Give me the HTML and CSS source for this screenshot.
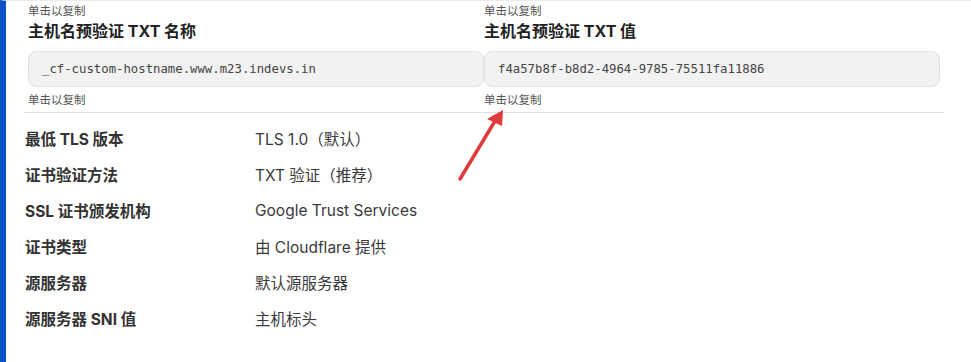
FILE: index.html
```html
<!DOCTYPE html>
<html lang="zh-CN">
   <head>
      <meta charset="UTF-8">
      <meta name="viewport" content="width=device-width, initial-scale=1.0">
      <title>自定义主机名</title>
      <link rel="stylesheet" href="styles.css">
   </head>
   <body>
      <div class="card">
         <div class="records">
            <div class="record">
               <div class="hint">单击以复制</div>
               <h3>主机名预验证 TXT 名称</h3>
               <div class="copy-box">_cf-custom-hostname.www.m23.indevs.in</div>
               <div class="hint">单击以复制</div>
            </div>
            <div class="record">
               <div class="hint">单击以复制</div>
               <h3>主机名预验证 TXT 值</h3>
               <div class="copy-box">f4a57b8f-b8d2-4964-9785-75511fa11886</div>
               <div class="hint">单击以复制</div>
            </div>
         </div>
         <hr class="divider">
         <dl class="details">
            <div class="row"><dt>最低 TLS 版本</dt><dd>TLS 1.0（默认）</dd></div>
            <div class="row"><dt>证书验证方法</dt><dd>TXT 验证（推荐）</dd></div>
            <div class="row"><dt>SSL 证书颁发机构</dt><dd>Google Trust Services</dd></div>
            <div class="row"><dt>证书类型</dt><dd>由 Cloudflare 提供</dd></div>
            <div class="row"><dt>源服务器</dt><dd>默认源服务器</dd></div>
            <div class="row"><dt>源服务器 SNI 值</dt><dd>主机标头</dd></div>
         </dl>
         <!-- annotation arrow -->
         <svg class="arrow" width="971" height="362" viewBox="0 0 971 362">
            <line x1="460" y1="179" x2="495" y2="121" stroke="#e03a3a" stroke-width="3.5" stroke-linecap="round"/>
            <polygon points="503,110 487,119 502,126" fill="#e03a3a"/>
         </svg>
      </div>
   </body>
</html>
```

FILE: styles.css
```css
body {
margin: 0;
padding: 0;
background-color: #fff;
font-family: Inter, "Noto Sans CJK SC", sans-serif;
color: #333;
}
.card {
position: relative;
width: 957px;
height: 361px;
border-top: 1px solid #ececec;
border-left: 6px solid #0b52c9;
border-right: 2px solid #e6e6e6;
padding: 0 0 0 18px;
box-sizing: content-box;
}
.records {
display: grid;
grid-template-columns: 456px 456px;
column-gap: 0;
padding-left: 4px;
}
.hint {
font-size: 11.5px;
line-height: 14px;
color: #555;
}
.records .hint:first-child {
margin-top: 3px;
}
.record h3 {
margin: 3px 0 0;
font-size: 16px;
line-height: 21px;
font-weight: 700;
color: #222;
}
.copy-box {
margin: 9px 0 6px;
height: 36px;
box-sizing: border-box;
padding: 0 13px;
display: flex;
align-items: center;
background-color: #f2f2f2;
border: 1px solid #e2e2e2;
border-radius: 8px;
font-family: "DejaVu Sans Mono", "Liberation Mono", monospace;
font-size: 12.3px;
color: #444;
}
.divider {
width: 920px;
margin: 5px 0 7px 0;
border: none;
border-top: 1px solid #e0e0e0;
}
.details {
margin: 0;
padding-left: 1px;
}
.row {
display: flex;
height: 36px;
align-items: center;
font-size: 15.5px;
}
.row dt {
width: 230px;
font-weight: 700;
color: #333;
}
.row dd {
margin: 0;
color: #3a3a3a;
}
.arrow {
position: absolute;
top: -1px;
left: -6px;
pointer-events: none;
}
```
